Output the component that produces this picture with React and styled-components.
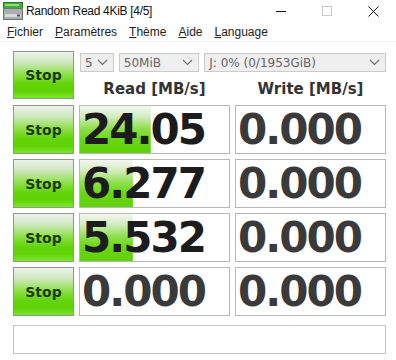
import React from "react";
import styled, { createGlobalStyle } from "styled-components";

const GlobalStyle = createGlobalStyle`
  body {
    margin: 0;
    background: #ffffff;
    font-family: "Liberation Sans", Arial, sans-serif;
    color: #1e1e1e;
  }
`;

const Window = styled.div`
  width: 396px;
  height: 360px;
  background: #fff;
  overflow: hidden;
`;

const TitleBar = styled.div`
  height: 22px;
  display: flex;
  align-items: center;
  padding-left: 3px;
`;

const Title = styled.div`
  flex: 1;
  margin-left: 3px;
  font-size: 12px;
  letter-spacing: -0.3px;
  color: #111;
`;

const WinButton = styled.div`
  width: 46px;
  height: 22px;
  display: flex;
  align-items: center;
  justify-content: center;
`;

const MenuBar = styled.div`
  height: 19px;
  display: flex;
  align-items: center;
  gap: 12px;
  padding-left: 7px;
  border-bottom: 1px solid #efefef;
`;

const MenuItem = styled.span`
  font-size: 12px;
  color: #222;
`;

const Key = styled.span`
  text-decoration: underline;
  text-underline-offset: 1px;
`;

const Main = styled.div`
  display: grid;
  grid-template-columns: 61px 151px 151px;
  column-gap: 5px;
  row-gap: 5px;
  padding: 9px 0 0 13px;
`;

const StopButton = styled.div`
  height: ${(p) => (p.$top ? 48 : 49)}px;
  box-sizing: border-box;
  border: 1px solid #8e9a88;
  background: linear-gradient(180deg, #eef2ec 0%, #cfe8c0 22%, #8fe04a 48%, #62d408 70%, #5fd206 85%, #7ee62c 100%);
  display: flex;
  align-items: center;
  justify-content: center;
  font-family: "DejaVu Sans", Verdana, sans-serif;
  font-weight: bold;
  font-size: 14px;
  color: #1a3a06;
`;

const Controls = styled.div`
  grid-column: span 2;
  display: flex;
  flex-direction: column;
`;

const DropRow = styled.div`
  display: flex;
  gap: 5px;
  margin: 2px 0 0 1px;
`;

const Select = styled.div`
  width: ${(p) => p.$w}px;
  height: 19px;
  box-sizing: border-box;
  border: 1px solid #cbcbcb;
  background: #efefef;
  display: flex;
  align-items: center;
  justify-content: space-between;
  padding: 0 5px 0 4px;
  font-family: "DejaVu Sans", Verdana, sans-serif;
  font-size: 12px;
  color: #666;
`;

const HeaderRow = styled.div`
  display: grid;
  grid-template-columns: 151px 151px;
  column-gap: 5px;
  margin-top: 7px;
  height: 21px;
`;

const Header = styled.div`
  text-align: center;
  line-height: 21px;
  font-family: "DejaVu Sans", Verdana, sans-serif;
  font-weight: bold;
  font-size: 15px;
  color: #333;
`;

const ValueBox = styled.div`
  height: 49px;
  box-sizing: border-box;
  border: 1px solid #b8b8b8;
  background-color: #fff;
  background-image: linear-gradient(180deg, #f4f7f1 0%, #d4ecc2 22%, #8ee04c 48%, #68d612 72%, #5fd208 100%);
  background-repeat: no-repeat;
  background-size: ${(p) => p.$fill}% 100%;
  display: flex;
  align-items: center;
  padding-left: 2px;
  font-family: "DejaVu Sans", Verdana, sans-serif;
  font-weight: bold;
  font-size: 42px;
  letter-spacing: -2px;
  color: ${(p) => (p.$zero ? "#3a3a3a" : "#1c1c1c")};
`;

const Comment = styled.div`
  grid-column: 1 / -1;
  margin-top: 4px;
  height: 29px;
  box-sizing: border-box;
  border: 1px solid #c4c4c4;
  background: #fff;
`;

const Chevron = () => (
  <svg width="11" height="7" viewBox="0 0 11 7">
    <path d="M1 1 L5.5 5.5 L10 1" fill="none" stroke="#6f6f6f" strokeWidth="1.2" />
  </svg>
);

const AppIcon = () => (
  <svg width="20" height="18" viewBox="0 0 20 18">
    <rect x="0.5" y="0.5" width="19" height="6" fill="#3fae3a" stroke="#2c7a2a" />
    <rect x="2" y="2" width="14" height="2" fill="#8fdf7a" />
    <rect x="0.5" y="6.5" width="19" height="11" fill="#a9aeb1" stroke="#6e7478" />
    <rect x="2" y="12" width="16" height="3" fill="#d8dcde" />
    <rect x="14" y="12.5" width="3" height="2" fill="#4a4f52" />
  </svg>
);

const rows = [
  { read: "24.05", fill: 47.5, write: "0.000" },
  { read: "6.277", fill: 35.5, write: "0.000" },
  { read: "5.532", fill: 35.5, write: "0.000" },
  { read: "0.000", fill: 0, write: "0.000" },
];

const menus = [
  ["F", "ichier"],
  ["P", "aramètres"],
  ["T", "hème"],
  ["A", "ide"],
  ["L", "anguage"],
];

export default function App() {
  return (
    <>
      <GlobalStyle />
      <Window>
        <TitleBar>
          <AppIcon />
          <Title>Random Read 4KiB [4/5]</Title>
          <WinButton>
            <svg width="10" height="10" viewBox="0 0 10 10">
              <path d="M0 5.5 H10" stroke="#111" strokeWidth="1" />
            </svg>
          </WinButton>
          <WinButton>
            <svg width="10" height="10" viewBox="0 0 10 10">
              <rect x="0.5" y="0.5" width="9" height="9" fill="none" stroke="#c8c8c8" />
            </svg>
          </WinButton>
          <WinButton>
            <svg width="11" height="11" viewBox="0 0 11 11">
              <path d="M0.5 0.5 L10.5 10.5 M10.5 0.5 L0.5 10.5" stroke="#111" strokeWidth="1" />
            </svg>
          </WinButton>
        </TitleBar>
        <MenuBar>
          {menus.map(([k, rest]) => (
            <MenuItem key={k}>
              <Key>{k}</Key>
              {rest}
            </MenuItem>
          ))}
        </MenuBar>
        <Main>
          <StopButton $top>Stop</StopButton>
          <Controls>
            <DropRow>
              <Select $w={34}>
                5 <Chevron />
              </Select>
              <Select $w={81}>
                50MiB <Chevron />
              </Select>
              <Select $w={183}>
                J: 0% (0/1953GiB) <Chevron />
              </Select>
            </DropRow>
            <HeaderRow>
              <Header>Read [MB/s]</Header>
              <Header>Write [MB/s]</Header>
            </HeaderRow>
          </Controls>
          {rows.map((r, i) => (
            <React.Fragment key={i}>
              <StopButton>Stop</StopButton>
              <ValueBox $fill={r.fill} $zero={r.read === "0.000"}>
                {r.read}
              </ValueBox>
              <ValueBox $fill={0} $zero>
                {r.write}
              </ValueBox>
            </React.Fragment>
          ))}
          <Comment />
        </Main>
      </Window>
    </>
  );
}
